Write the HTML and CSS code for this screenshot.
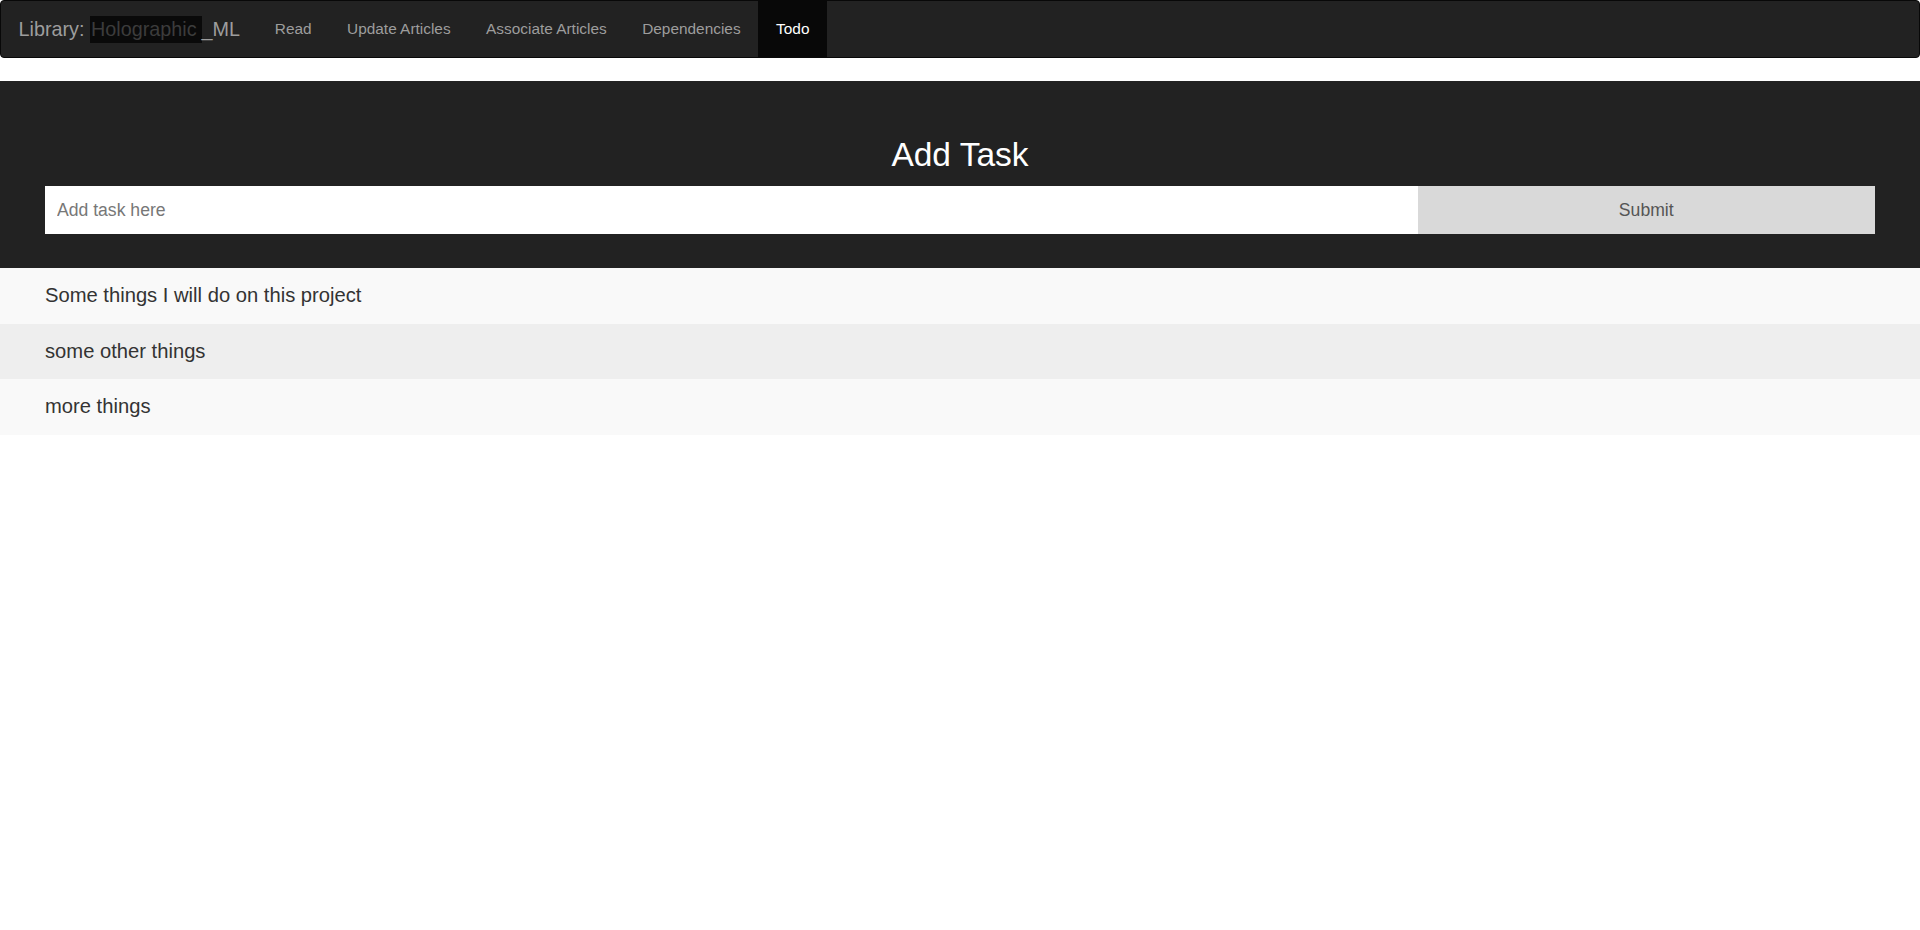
FILE: index.html
```html
<!DOCTYPE html>
<html lang="en">
<head>
<meta charset="utf-8">
<title>Todo</title>
<link rel="stylesheet" href="styles.css">
</head>
<body>
<nav class="navbar">
  <a class="brand" href="#">Library: <span class="redacted">Holographic</span>_ML</a>
  <ul class="nav">
    <li><a href="#">Read</a></li>
    <li><a href="#">Update Articles</a></li>
    <li><a href="#">Associate Articles</a></li>
    <li><a href="#">Dependencies</a></li>
    <li class="active"><a href="#">Todo</a></li>
  </ul>
</nav>
<section class="hero">
  <h2 class="hero-title">Add Task</h2>
  <form class="task-form">
    <input class="task-input" type="text" placeholder="Add task here">
    <button class="task-submit" type="button">Submit</button>
  </form>
</section>
<ul class="tasks">
  <li class="task">Some things I will do on this project</li>
  <li class="task task-alt">some other things</li>
  <li class="task">more things</li>
</ul>
</body>
</html>
```
FILE: styles.css
```css
* { box-sizing: border-box; }
html, body {
  margin: 0;
  padding: 0;
  background: #fff;
  font-family: "Liberation Sans", Arial, sans-serif;
  color: #333;
}
.navbar {
  display: flex;
  align-items: stretch;
  height: 58px;
  background: #222;
  border: 1px solid #080808;
  border-radius: 4px;
  margin: 0 0 23px 0;
  padding: 0;
}
.brand {
  display: flex;
  align-items: center;
  padding: 0 17px 0 17.5px;
  font-size: 19.8px;
  line-height: 22px;
  color: #9d9d9d;
  text-decoration: none;
  white-space: pre;
}
.redacted {
  background: #0a0a0a;
  color: #3c3c3c;
  padding: 3px 5px 3px 1px;
  line-height: 21px;
}
.nav {
  display: flex;
  list-style: none;
  margin: 0;
  padding: 0;
}
.nav li { display: flex; }
.nav a {
  display: flex;
  align-items: center;
  padding: 0 17.75px;
  font-size: 15.4px;
  color: #9d9d9d;
  text-decoration: none;
}
.nav .active a {
  background: #080808;
  color: #fff;
}
.hero {
  background: #222;
  padding: 56px 45px 34px;
}
.hero-title {
  margin: 0 0 13px;
  font-size: 33.5px;
  line-height: 36px;
  font-weight: 400;
  color: #fff;
  text-align: center;
}
.task-form {
  display: flex;
  margin: 0;
}
.task-input {
  width: 75%;
  min-width: 0;
  height: 48px;
  border: 0;
  margin: 0;
  padding: 0 11px 0 12px;
  font-family: inherit;
  font-size: 17.6px;
  color: #555;
  background: #fff;
  outline: none;
}
.task-input::placeholder { color: #777; }
.task-submit {
  width: 25%;
  height: 48px;
  border: 0;
  margin: 0;
  padding: 0;
  font-family: inherit;
  font-size: 17.6px;
  color: #555;
  background: #d9d9d9;
}
.tasks {
  list-style: none;
  margin: 0;
  padding: 0;
}
.task {
  padding: 13px 45px 14px;
  font-size: 20.2px;
  line-height: 28.5px;
  background: #f9f9f9;
  color: #333;
}
.task-alt { background: #eee; }
```
